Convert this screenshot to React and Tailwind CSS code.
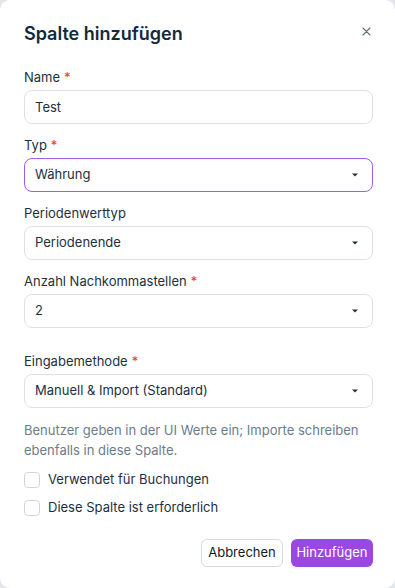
import React, { useState } from 'react';

const font = { fontFamily: 'Inter, "Noto Sans", sans-serif' };

function Label({ children, required }) {
  return (
    <label className="block text-[13px] leading-5 text-[#1d3040] mb-[3px]">
      {children}
      {required && <span className="text-[#e0401c] ml-1">*</span>}
    </label>
  );
}

function Caret() {
  return (
    <svg width="6" height="4" viewBox="0 0 6 4" className="shrink-0">
      <path d="M0 0.5h6L3 3.5z" fill="#1d3040" />
    </svg>
  );
}

function SelectBox({ value, focused }) {
  return (
    <div
      className={`h-[34px] rounded-lg border bg-white flex items-center justify-between pl-[10px] pr-[14px] text-[13px] text-[#1d3040] ${
        focused ? 'border-[#a45ceb] border-[1.5px]' : 'border-[#dde1e7]'
      }`}
    >
      <span>{value}</span>
      <Caret />
    </div>
  );
}

function Check({ label }) {
  const [on, setOn] = useState(false);
  return (
    <label className="flex items-center gap-2 h-5 text-[13px] text-[#1d3040] cursor-pointer">
      <span
        onClick={() => setOn(!on)}
        className={`w-4 h-4 rounded-[4px] border ${on ? 'bg-[#9b47e3] border-[#9b47e3]' : 'border-[#cfd6de] bg-white'}`}
      />
      {label}
    </label>
  );
}

export default function App() {
  const [name, setName] = useState('Test');

  return (
    <div className="w-[395px] h-[588px] bg-[#e3e7ec]" style={font}>
      <div className="w-full h-full bg-white rounded-[10px] pl-6 pr-[22px] pt-5">
        {/* Header */}
        <div className="flex items-start justify-between">
          <h2 className="text-[18px] leading-7 font-semibold text-[#0f2b3d]">Spalte hinzufügen</h2>
          <button className="mt-[7px] mr-[2px] text-[#5d7181]" aria-label="Schließen">
            <svg width="9" height="9" viewBox="0 0 9 9">
              <path d="M1 1l7 7M8 1L1 8" stroke="currentColor" strokeWidth="1.1" strokeLinecap="round" />
            </svg>
          </button>
        </div>

        {/* Form */}
        <div className="mt-[19px]">
          <Label required>Name</Label>
          <input
            value={name}
            onChange={(e) => setName(e.target.value)}
            className="w-full h-[34px] rounded-lg border border-[#dde1e7] px-[10px] text-[13px] text-[#1d3040] outline-none"
          />
        </div>

        <div className="mt-[11px]">
          <Label required>Typ</Label>
          <SelectBox value="Währung" focused />
        </div>

        <div className="mt-[11px]">
          <Label>Periodenwerttyp</Label>
          <SelectBox value="Periodenende" />
        </div>

        <div className="mt-[11px]">
          <Label required>Anzahl Nachkommastellen</Label>
          <SelectBox value="2" />
        </div>

        <div className="mt-[23px]">
          <Label required>Eingabemethode</Label>
          <SelectBox value="Manuell & Import (Standard)" />
        </div>

        <p className="mt-3 text-[13px] leading-5 text-[#6a7d8c]">
          Benutzer geben in der UI Werte ein; Importe schreiben ebenfalls in diese Spalte.
        </p>

        <div className="mt-[10px] flex flex-col gap-2">
          <Check label="Verwendet für Buchungen" />
          <Check label="Diese Spalte ist erforderlich" />
        </div>

        {/* Footer */}
        <div className="mt-[21px] flex justify-end gap-2">
          <button className="h-7 w-[82px] rounded-md border border-[#d6dbe1] bg-white text-[13px] text-[#111827]">
            Abbrechen
          </button>
          <button className="h-7 w-[82px] rounded-md bg-[#9b47e3] text-[13px] text-white">
            Hinzufügen
          </button>
        </div>
      </div>
    </div>
  );
}
